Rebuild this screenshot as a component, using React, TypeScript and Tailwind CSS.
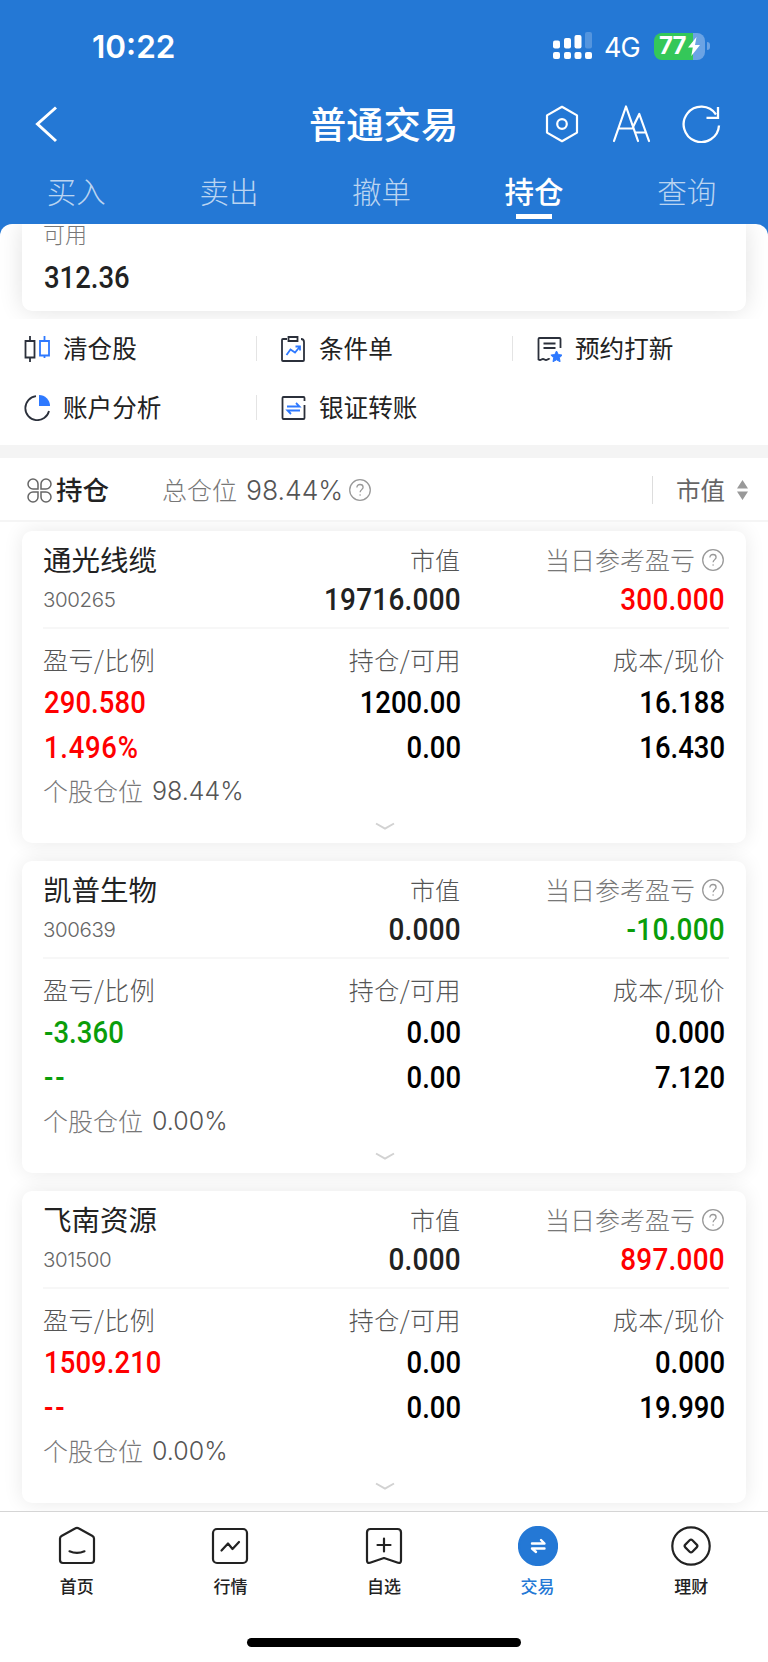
import type { ReactNode } from "react"
import clsx from "clsx"

const tabs = ["买入", "卖出", "撤单", "持仓", "查询"]

type Holding = {
  name: string;
  code: string;
  value: string;
  today: string;
  profit: string;
  ratio: string;
  amount: string;
  available: string;
  cost: string;
  price: string;
  weight: string;
}

const holdings: Holding[] = [
  {
    name: "通光线缆", code: "300265", value: "19716.000", today: "300.000", profit: "290.580", ratio: "1.496%",
    amount: "1200.00", available: "0.00", cost: "16.188", price: "16.430", weight: "98.44%",
  },
  {
    name: "凯普生物", code: "300639", value: "0.000", today: "-10.000", profit: "-3.360", ratio: "--",
    amount: "0.00", available: "0.00", cost: "0.000", price: "7.120", weight: "0.00%",
  },
  {
    name: "飞南资源", code: "301500", value: "0.000", today: "897.000", profit: "1509.210", ratio: "--",
    amount: "0.00", available: "0.00", cost: "0.000", price: "19.990", weight: "0.00%",
  },
]

const trend = (value: string) => (value.startsWith("-") ? "text-[#0a9d0a]" : "text-[#ff0000]")

// Roboto squeezed a little, to get the narrow figures of a DIN face
function Num({ children, right, large, className }: { children: ReactNode; right?: boolean; large?: boolean; className?: string }) {
  return (
    <span
      className={clsx(
        "inline-block scale-x-[0.9] font-['Roboto',sans-serif] font-medium",
        large ? "text-[31px] tracking-[0.3px]" : "mt-[2px] text-[30.5px]",
        right ? "-mr-px origin-right text-right" : "ml-px origin-left",
        className
      )}
    >
      {children}
    </span>
  )
}

function HelpIcon() {
  return (
    <svg width="22" height="22" viewBox="0 0 22 22" fill="none" stroke="#999" strokeWidth="1.3">
      <circle cx="11" cy="11" r="10.3" />
      <path d="M7.9 8.6c0-1.9 1.3-3.1 3.1-3.1s3.1 1.2 3.1 2.8c0 2.2-3 2.5-3 5" />
      <circle cx="11.1" cy="16" r=".8" fill="#999" stroke="none" />
    </svg>
  )
}

function StatusBar() {
  return (
    <div className="flex h-[92px] items-center pl-[92px] pr-[58px] font-['Inter',sans-serif]">
      <span className="mt-[2px] text-[31.5px] font-semibold">10:22</span>
      <div className="ml-auto flex items-center">
        <svg width="40" height="28" viewBox="0 0 40 28" fill="#fff">
          <rect x="1" y="8.5" width="7" height="8" rx="2" />
          <rect x="12" y="6" width="7" height="10.5" rx="2" />
          <rect x="22.5" y="3" width="7" height="13.5" rx="2" />
          <rect x="33" y="0" width="7" height="16.5" rx="2" fillOpacity=".22" />
          <rect x="1" y="20" width="7" height="7" rx="2" />
          <rect x="12" y="20" width="7" height="7" rx="2" />
          <rect x="22.5" y="20" width="7" height="7" rx="2" />
          <rect x="33" y="20" width="7" height="7" rx="2" />
        </svg>
        <span className="ml-3 mt-[2px] w-[37px] text-[27px] tracking-[-1px]">4G</span>
        <div className="ml-[13px] flex h-[27px] w-[51px] items-center rounded-[8px] bg-[linear-gradient(90deg,#34c759_77%,#6ba3e4_77%)] pl-[5px]">
          <span className="w-[29px] text-[24px] font-bold tracking-[-1px]">77</span>
          <svg width="12" height="19" viewBox="0 0 12 19" fill="#fff">
            <path d="M8.5 0 0 10.5h4.8L3.3 19 12 8H7z" />
          </svg>
        </div>
        <div className="ml-[2px] h-2 w-[3px] rounded-r-full bg-[#6ba3e4]" />
      </div>
    </div>
  )
}

function Header() {
  return (
    <header className="h-[236px] bg-[#2478d5] text-white">
      <StatusBar />
      <div className="flex h-[63px] items-center pl-[34px] pr-[47px]">
        <svg width="26" height="38" viewBox="0 0 26 38" fill="none" stroke="#fff" strokeWidth="3">
          <path d="M22 2.5 3.5 19 22 36" />
        </svg>
        <h1 className="ml-[249px] text-[37.3px] font-medium">普通交易</h1>
        <div className="ml-auto flex items-center">
          <svg width="36" height="38" viewBox="0 0 36 38" fill="none" stroke="#fff" strokeWidth="2.2" strokeLinejoin="round">
            <path d="M18 1.8 33 10.4v17.2L18 36.2 3 27.6V10.4z" />
            <circle cx="18" cy="19" r="4.8" />
          </svg>
          <svg className="ml-[32px]" width="40" height="38" viewBox="0 0 40 38" fill="none" stroke="#fff" strokeWidth="2.2" strokeLinecap="round" strokeLinejoin="round">
            <path d="M2 36 14 1.5 26 36M7.5 23.5h14" />
            <path d="m21 22 6.3-13L37 36M24 27.5h9.5" />
          </svg>
          <svg className="ml-[29px]" width="40" height="38" viewBox="0 0 40 38" fill="none" stroke="#fff" strokeWidth="2.3">
            <path d="M38 20.5A17.7 17.7 0 1 1 35 9.5" />
            <path d="M37 2v10.8H25.5" />
          </svg>
        </div>
      </div>
      <nav className="grid w-[763px] grid-cols-5 text-center text-[29.5px]">
        {tabs.map((tab) => (
          <div key={tab} className="flex flex-col items-center">
            <span className={clsx("h-[59px] leading-[70px]", tab === "持仓" ? "font-medium" : "font-light text-white/70")}>{tab}</span>
            {tab === "持仓" && <i className="h-[5px] w-9 bg-white" />}
          </div>
        ))}
      </nav>
    </header>
  )
}

function Action({ label, divider, children }: { label: string; divider?: boolean; children: ReactNode }) {
  return (
    <div className="flex h-[59px] items-center pl-6">
      <svg width="26" height="26" viewBox="0 0 26 26" fill="none" stroke="#2b303b" strokeWidth="1.8">{children}</svg>
      <span className="-mt-[2px] ml-[13px] text-[24.6px] text-[#222]">{label}</span>
      {divider && <i className="-mr-px ml-auto h-[25px] w-px bg-[#e4e4e4]" />}
    </div>
  )
}

function Actions() {
  return (
    <section className="relative grid h-[126px] grid-cols-3 content-start bg-white">
      <Action label="清仓股" divider>
        <path d="M1.5 5h9v16.5h-9zM6 0v5m0 16.5V26" />
        <path stroke="#2e79ff" d="M16 5h9v14.5h-9zM20.5 0v5m0 14.5V22" />
      </Action>
      <Action label="条件单" divider>
        <path d="M7 3H3Q2 3 2 4v20q0 1 1 1h20q1 0 1-1V6q0-3-3-3" />
        <path d="M8.5 1h9v4h-9z" />
        <path stroke="#2e79ff" d="m6.5 19 4-5.5 4.5 3 5-6M15.5 10.5H20v4" />
      </Action>
      <Action label="预约打新">
        <path d="M24.5 12V3q0-1-1-1h-20q-1 0-1 1v20.5q1.5 1 3 0t3 0 3 0 2 0" />
        <path d="M7.5 7.5h12M7.5 12h12" />
        <path fill="#2e79ff" stroke="#2e79ff" strokeWidth="1" strokeLinejoin="round" d="m20.500 15 1.800 3.500 3.900.6-2.800 2.700.7 3.900-3.600-1.900-3.500 1.900.7-3.900-2.800-2.700 3.900-.6z" />
      </Action>
      <Action label="账户分析" divider>
        <path d="M12 1.200A12 12 0 1 0 25 16" />
        <path fill="#2e79ff" stroke="none" d="M15 0a11 11 0 0 1 11 11H15z" />
      </Action>
      <Action label="银证转账">
        <path d="M24.500 6V3q0-1-1-1h-20q-1 0-1 1v20q0 1 1 1h20q1 0 1-1V10" />
        <path stroke="#2e79ff" d="M7 11.500h12.500L16 8M20 15.500H7.500L11 19" />
      </Action>
    </section>
  )
}

function PositionBar() {
  return (
    <div className="relative flex h-[64px] items-center border-b-2 border-[#f5f5f5] bg-white pl-[27px] pr-[20px] pt-[2px]">
      <svg width="25" height="25" viewBox="0 0 25 25" fill="none" stroke="#666" strokeWidth="1.5">
        <path d="M11 11H6A5 5 0 1 1 11 6zM14 11V6a5 5 0 1 1 5 5zM11 14v5a5 5 0 1 1-5-5zM14 14h5a5 5 0 1 1-5 5z" />
      </svg>
      <span className="-mt-px ml-[4px] text-[26.5px] font-medium text-[#222]">持仓</span>
      <span className="-mt-px ml-[53px] text-[25px] font-light text-[#777]">总仓位</span>
      <span className="ml-[9px] w-[96px] font-['Inter',sans-serif] text-[26.5px] font-light text-[#555]">98.44%</span>
      <span className="ml-[7px]"><HelpIcon /></span>
      <i className="ml-auto h-7 w-px bg-[#ddd]" />
      <span className="ml-[23px] text-[24.5px] text-[#666]">市值</span>
      <svg className="ml-[12px]" width="11" height="20" viewBox="0 0 11 20" fill="#999">
        <path d="M5.5 0 11 8.5H0zM5.5 20 11 11.5H0z" />
      </svg>
    </div>
  )
}

function HoldingCard({ item }: { item: Holding }) {
  return (
    <article className="h-[312px] rounded-[10px] bg-white pl-[21px] pt-[11px] shadow-[0_0_20px_rgba(0,0,0,0.09)]">
      <div className="grid grid-cols-[208px_209px_264px] grid-rows-[36px_42px] items-center">
        <h2 className="-mt-[2px] text-[28.5px] text-[#222]">{item.name}</h2>
        <span className="-mt-[2px] text-right text-[25px] font-light text-[#555]">市值</span>
        <div className="flex items-center justify-end gap-[7px] text-[25px] font-light text-[#777]">
          <span className="-mt-[2px]">当日参考盈亏</span>
          <HelpIcon />
        </div>
        <span className="mt-[3px] font-['Inter',sans-serif] text-[20.5px] font-light tracking-[-0.4px] text-[#666]">{item.code}</span>
        <Num right large className="text-[#222]">{item.value}</Num>
        <Num right large className={trend(item.today)}>{item.today}</Num>
      </div>
      <hr className="mr-[17px] mt-[7px] border-t-2 border-[#f7f7f7]" />
      <div className="mt-[13px] grid grid-cols-[208px_209px_264px] grid-rows-[34px_4px_45px_45px] items-center">
        <span className="text-[25px] font-light tracking-[0.5px] text-[#555]">盈亏/比例</span>
        <span className="-mr-px text-right text-[25px] font-light tracking-[0.5px] text-[#555]">持仓/可用</span>
        <span className="-mr-px text-right text-[25px] font-light tracking-[0.5px] text-[#555]">成本/现价</span>
        <i className="col-span-3" />
        <Num className={clsx("tracking-[0.1px]", trend(item.profit))}>{item.profit}</Num>
        <Num right>{item.amount}</Num>
        <Num right>{item.cost}</Num>
        <Num className={clsx(trend(item.profit), item.ratio === "--" ? "tracking-[2px]" : "tracking-[0.8px]")}>{item.ratio}</Num>
        <Num right>{item.available}</Num>
        <Num right>{item.price}</Num>
      </div>
      <div className="flex h-[42px] items-center text-[25px] font-light text-[#777]">
        <span className="-mt-[2px]">个股仓位</span>
        <span className="ml-[9px] mt-px font-['Inter',sans-serif] text-[25px] text-[#555]">{item.weight}</span>
      </div>
      <svg className="ml-[332px] mt-[10px]" width="20" height="9" viewBox="0 0 20 9" fill="none" stroke="#d2d2d2" strokeWidth="2">
        <path d="m1 1.5 9 5 9-5" />
      </svg>
    </article>
  )
}

function NavItem({ label, active, children }: { label: string; active?: boolean; children: ReactNode }) {
  return (
    <div className={clsx("flex flex-col items-center", active ? "text-[#2478d5]" : "text-[#222]")}>
      <svg width="40" height="40" viewBox="0 0 40 40" fill="none" stroke="currentColor" strokeWidth="2.2" strokeLinejoin="round" strokeLinecap="round">
        {children}
      </svg>
      <span className="mt-[8px] text-[17px] font-medium leading-6">{label}</span>
    </div>
  )
}

function BottomNav() {
  return (
    <footer className="relative h-[151px] border-t border-[#d5d5d5] bg-white">
      <div className="grid grid-cols-5 pt-[14px]">
        <NavItem label="首页">
          <path d="M18.5 2.3q1.5-.9 3 0L35.5 10q1.5.8 1.5 2.5V34q0 3-3 3H6q-3 0-3-3V12.5q0-1.7 1.5-2.5z" />
          <path d="M12.5 25.3q7.5 3.2 15 0" />
        </NavItem>
        <NavItem label="行情">
          <rect x="3" y="3" width="34" height="34" rx="4" />
          <path d="m11.5 24.5 6.5-7 4.5 5.5 6.5-7" />
        </NavItem>
        <NavItem label="自选">
          <path d="M6.500 3h27Q37 3 37 6.500v28q0 3-3 2.300L20 32 6 36.800q-3 .7-3-2.300v-28Q3 3 6.500 3z" />
          <path d="M20 12.500v13M13.500 19h13" />
        </NavItem>
        <NavItem label="交易" active>
          <circle cx="20" cy="20" r="19" fill="currentColor" />
          <path stroke="#fff" strokeWidth="2.4" d="M14 17.500h12.500L23 14M26.500 22.500H14l4 3.500" />
        </NavItem>
        <NavItem label="理财">
          <circle cx="20" cy="20" r="18.7" />
          <path d="M18.600 14.300q1.400-1.400 2.800 0l4.300 4.300q1.400 1.400 0 2.800l-4.300 4.300q-1.400 1.400-2.800 0l-4.300-4.300q-1.400-1.400 0-2.800z" />
        </NavItem>
      </div>
      <div className="mx-auto mt-[40px] h-[9px] w-[274px] rounded-full bg-black" />
    </footer>
  )
}

export default function App() {
  return (
    <div className="h-[1662px] w-[768px] overflow-hidden bg-white font-['Noto_Sans_CJK_SC',sans-serif] leading-none">
      <Header />
      <main className="relative -mt-3 rounded-t-[12px] bg-white">
        <section className="h-[95px] overflow-hidden rounded-t-[12px] px-[22px]">
          <div className="flow-root h-[87px] rounded-b-[10px] bg-white px-[21px] shadow-[0_0_24px_rgba(0,0,0,0.12)]">
            <p className="-mt-[2px] h-[39px] text-[22px] font-light text-[#777]">可用</p>
            <Num className="text-[#222]">312.36</Num>
          </div>
        </section>
        <Actions />
        <div className="relative h-[13px] bg-[#f4f4f4]" />
        <PositionBar />
        <section className="flex h-[989px] flex-col gap-[18px] px-[22px] pt-[9px]">
          {holdings.map((item) => (
            <HoldingCard key={item.code} item={item} />
          ))}
        </section>
      </main>
      <BottomNav />
    </div>
  )
}
